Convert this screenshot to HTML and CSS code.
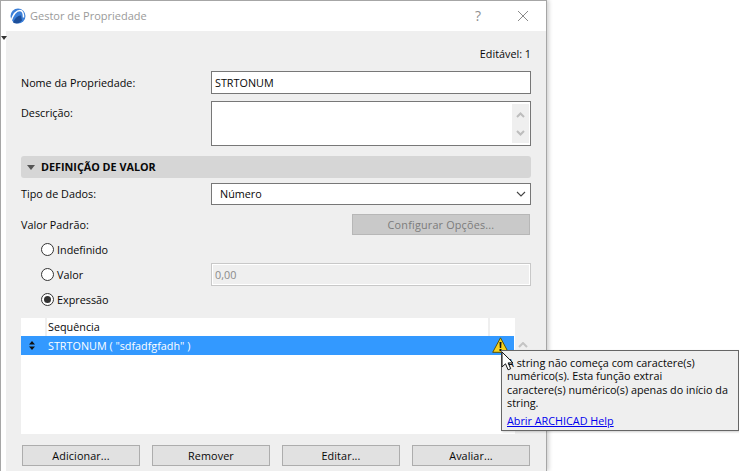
FILE: index.html
```html
<!DOCTYPE html>
<html lang="pt">
<head>
<meta charset="utf-8">
<title>Gestor de Propriedade</title>
<link rel="stylesheet" href="styles.css">
</head>
<body>
<div class="window">
  <header class="titlebar">
    <svg class="logo" width="16" height="16" viewBox="0 0 16 16"><circle cx="8" cy="8" r="7.5" fill="#3b7fd8"/><path d="M1 13C3 7 6 2.500 10 2.500c2.600 0 3.600 3 3.500 7" fill="none" stroke="#fff" stroke-width="1.500"/><path d="M3 14.500C5 10 8 7 11 7.500l1 5a7.500 7.500 0 0 1-9 2z" fill="#1d4f9a"/></svg>
    <span class="title">Gestor de Propriedade</span>
    <span class="help">?</span>
    <svg class="close" width="12" height="12" viewBox="0 0 12 12"><path d="M1 1l10 10M11 1L1 11" stroke="#8a8a8a" stroke-width="1" fill="none"/></svg>
  </header>
  <svg class="side-arrow" width="6" height="4" viewBox="0 0 6 4"><path d="M0 0h6L3 4z" fill="#333"/></svg>
  <main class="content">
    <div class="editable">Editável: 1</div>
    <div class="row name-row">
      <label>Nome da Propriedade:</label>
      <div class="field">STRTONUM</div>
    </div>
    <div class="row desc-row">
      <label>Descrição:</label>
      <div class="field area">
        <div class="area-scroll">
          <svg width="9" height="6" viewBox="0 0 9 6"><path d="M1 5l3.500-3.500L8 5" fill="none" stroke="#bdbdbd" stroke-width="2"/></svg>
          <svg width="9" height="6" viewBox="0 0 9 6"><path d="M1 1l3.500 3.500L8 1" fill="none" stroke="#bdbdbd" stroke-width="2"/></svg>
        </div>
      </div>
    </div>
    <div class="section">
      <svg width="8" height="5" viewBox="0 0 8 5"><path d="M0 0h8L4 5z" fill="#555"/></svg>
      <span>DEFINIÇÃO DE VALOR</span>
    </div>
    <div class="row type-row">
      <label>Tipo de Dados:</label>
      <div class="field select">
        <span>Número</span>
        <svg width="10" height="6" viewBox="0 0 10 6"><path d="M1 1l4 4 4-4" fill="none" stroke="#444" stroke-width="1.100"/></svg>
      </div>
    </div>
    <div class="row default-row">
      <label>Valor Padrão:</label>
      <div class="config">Configurar Opções...</div>
    </div>
    <div class="row radio-row">
      <label class="radio"><i class="dot"></i>Indefinido</label>
    </div>
    <div class="row radio-row">
      <label class="radio"><i class="dot"></i>Valor</label>
      <div class="field disabled">0,00</div>
    </div>
    <div class="row radio-row">
      <label class="radio"><i class="dot on"></i>Expressão</label>
    </div>
    <div class="list">
      <div class="table">
        <div class="thead">
          <span class="c-sort"></span>
          <span class="c-seq">Sequência</span>
          <span class="c-end"></span>
        </div>
        <div class="trow">
          <span class="c-sort"><svg width="6" height="9" viewBox="0 0 6 9"><path d="M3 0L6 3.500H0zM0 5.500h6L3 9z" fill="#111"/></svg></span>
          <span class="c-seq">STRTONUM ( "sdfadfgfadh" )</span>
          <span class="c-warn"><svg width="17" height="16" viewBox="0 0 17 16"><path d="M8.500 .8L16.300 15.300H.7z" fill="#f7d21e" stroke="#5c5200" stroke-width="1"/><path d="M7.500 5h2l-.3 6H7.800zM7.500 12h2v2h-2z" fill="#111"/></svg></span>
        </div>
      </div>
      <div class="list-scroll">
        <svg width="10" height="6" viewBox="0 0 10 6"><path d="M1 5l4-4 4 4" fill="none" stroke="#c4c4c4" stroke-width="2"/></svg>
      </div>
    </div>
    <div class="buttons">
      <button>Adicionar...</button>
      <button>Remover</button>
      <button>Editar...</button>
      <button>Avaliar...</button>
    </div>
  </main>
</div>
<aside class="tooltip">
  <p>A string não começa com caractere(s)<br>numérico(s). Esta função extrai<br>caractere(s) numérico(s) apenas do início da<br>string.</p>
  <a href="#">Abrir ARCHICAD Help</a>
</aside>
<svg class="cursor" width="14" height="20" viewBox="0 0 14 20"><path d="M1 1v15l3.500-3.200 2.600 6 2.600-1.100-2.600-5.800H12z" fill="#fff" stroke="#111" stroke-width="1"/></svg>
</body>
</html>
```
FILE: styles.css
```css
* { box-sizing: border-box; }
html, body { margin: 0; padding: 0; width: 739px; height: 471px; overflow: hidden; background: #fff; }
body { font: 10.800px/14px "Open Sans", "Noto Sans", sans-serif; color: #080808; position: relative; }
.window { width: 547px; height: 471px; background: #fff; border: 1px solid #a6a6a6; border-width: 1px 1px 0 1px; box-shadow: 2px 0 4px rgba(0,0,0,.18); position: relative; }
.titlebar { height: 30px; display: flex; align-items: center; padding-left: 9px; background: #fff; }
.logo { margin-right: 4px; }
.title { color: #9a9a9a; font-size: 11px; flex: 1; }
.help { color: #8f8f8f; font-size: 14px; width: 45px; padding-left: 3px; }
.close { margin-right: 17px; }
.side-arrow { position: absolute; left: 0; top: 35px; }
.content { margin-left: 5px; height: 440px; background: #efefef; padding: 16px 15px 0; }
.editable { text-align: right; height: 14px; margin-bottom: 10px; }
.row { display: grid; grid-template-columns: 190px 320px; align-items: center; }
.name-row { height: 23px; margin-bottom: 7px; }
.desc-row { height: 45px; margin-bottom: 10px; align-items: start; }
.desc-row label { padding-top: 5px; }
.field { background: #fff; border: 1px solid #777; height: 100%; padding: 0 3px; display: flex; align-items: center; }
.area { height: 45px; justify-content: flex-end; padding: 2px 1px 2px 0; }
.area-scroll { width: 17px; height: 100%; background: #efefef; display: flex; flex-direction: column; justify-content: space-between; align-items: center; padding: 8px 0 7px; }
.section { height: 22px; margin-bottom: 5px; background: #d6d6d6; border-radius: 3px; display: flex; align-items: center; gap: 6px; padding-left: 6px; font-weight: 700; }
.type-row { height: 22px; margin-bottom: 9px; }
.select { justify-content: space-between; padding: 0 4px 0 8px; }
.default-row { height: 21px; margin-bottom: 3px; grid-template-columns: 331px 178px; }
.config { height: 21px; background: #c9c9c9; border: 1px solid #b7b7b7; color: #7b7b7b; text-align: center; line-height: 19px; letter-spacing: .2px; }
.radio-row { height: 23px; margin-bottom: 2px; }
.radio { display: flex; align-items: center; gap: 3px; padding-left: 20px; }
.dot { width: 13px; height: 13px; border-radius: 50%; border: 1px solid #333; background: #fff; position: relative; }
.dot.on::after { content: ""; position: absolute; left: 2px; top: 2px; width: 7px; height: 7px; border-radius: 50%; background: #333; }
.disabled { background: #efefef; border: 1px solid #c8c8c8; box-shadow: inset 0 0 0 1px #fff; color: #8a8a8a; }
.list { display: flex; height: 116px; margin: 7px 0 11px; }
.table { width: 494px; background: #fff; }
.thead { height: 18px; width: 492px; display: flex; align-items: center; background: #fff; }
.thead .c-sort { border-right: 2px solid #efefef; height: 100%; }
.thead .c-end { width: 25px; height: 100%; border-left: 2px solid #efefef; }
.trow { height: 19px; width: 493px; display: flex; align-items: center; background: #3399ff; color: #fff; }
.c-sort { width: 26px; display: flex; justify-content: center; padding-right: 4px; }
.c-seq { flex: 1; padding-left: 1px; }
.c-warn { width: 25px; display: flex; justify-content: flex-end; padding-right: 5px; height: 19px; padding-top: 1px; }
.list-scroll { flex: 1; padding: 24px 0 0 3px; }
.list-scroll svg { display: block; }
.buttons { display: grid; grid-template-columns: repeat(4, 118px); gap: 12px; margin-left: 1px; }
button { height: 21px; background: #e1e1e1; border: 1px solid #adadad; padding: 0; font: inherit; color: #080808; letter-spacing: .1px; }
.tooltip { position: absolute; left: 501px; top: 350px; width: 238px; height: 81px; background: #efefef; border: 1px solid #666; padding: 5px 5px 0; box-shadow: 1px 1px 2px rgba(0,0,0,.2); line-height: 13.300px; }
.tooltip p { margin: 0 0 5px; }
.tooltip a { color: #0000ee; text-decoration: underline; }
.cursor { position: absolute; left: 501px; top: 351px; }
```
